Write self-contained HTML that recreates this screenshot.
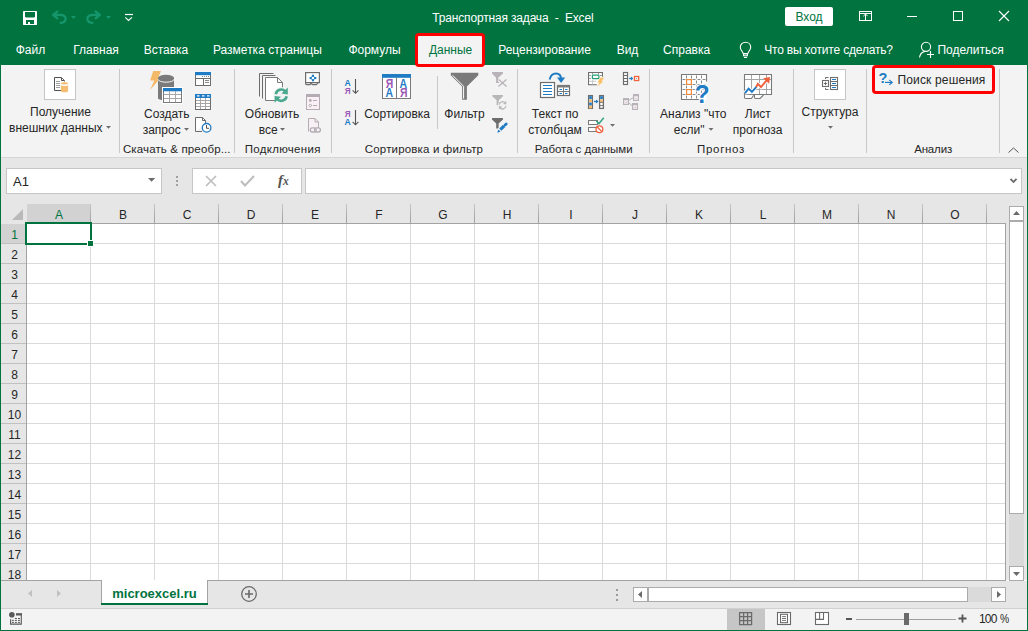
<!DOCTYPE html>
<html><head><meta charset="utf-8">
<style>
*{margin:0;padding:0;box-sizing:border-box}
html,body{width:1028px;height:631px;overflow:hidden;background:#fff}
body{position:relative;font-family:"Liberation Sans",sans-serif;font-size:12px;color:#262626}
.a{position:absolute}
.t{position:absolute;white-space:pre;line-height:12px;font-size:12px}
.w{color:#fff}
svg{position:absolute;overflow:visible}
</style></head><body>
<!-- title + tabs green -->
<div class="a" style="left:0;top:0;width:1028px;height:65px;background:#00733f"></div>
<!-- ribbon -->
<div class="a" style="left:0;top:65px;width:1028px;height:92px;background:#f3f3f3"></div>
<div class="a" style="left:0;top:157px;width:1028px;height:1px;background:#d5d5d5"></div>
<!-- formula area -->
<div class="a" style="left:0;top:158px;width:1028px;height:46px;background:#e6e6e6"></div>

<!-- headers -->
<div class="a" style="left:0;top:204px;width:1028px;height:20px;background:#e6e6e6"></div>
<!-- grid -->
<div class="a" id="grid" style="left:26px;top:224px;width:980px;height:356px;background:#fff"></div>
<!-- row headers -->
<div class="a" style="left:0;top:224px;width:26px;height:356px;background:#e6e6e6"></div>

<!-- GRID -->
<div class="a" style="left:90px;top:204px;width:1px;height:19px;background:linear-gradient(#c4c4c4,#9e9e9e)"></div>
<div class="a" style="left:154px;top:204px;width:1px;height:19px;background:linear-gradient(#c4c4c4,#9e9e9e)"></div>
<div class="a" style="left:218px;top:204px;width:1px;height:19px;background:linear-gradient(#c4c4c4,#9e9e9e)"></div>
<div class="a" style="left:282px;top:204px;width:1px;height:19px;background:linear-gradient(#c4c4c4,#9e9e9e)"></div>
<div class="a" style="left:346px;top:204px;width:1px;height:19px;background:linear-gradient(#c4c4c4,#9e9e9e)"></div>
<div class="a" style="left:410px;top:204px;width:1px;height:19px;background:linear-gradient(#c4c4c4,#9e9e9e)"></div>
<div class="a" style="left:474px;top:204px;width:1px;height:19px;background:linear-gradient(#c4c4c4,#9e9e9e)"></div>
<div class="a" style="left:538px;top:204px;width:1px;height:19px;background:linear-gradient(#c4c4c4,#9e9e9e)"></div>
<div class="a" style="left:602px;top:204px;width:1px;height:19px;background:linear-gradient(#c4c4c4,#9e9e9e)"></div>
<div class="a" style="left:666px;top:204px;width:1px;height:19px;background:linear-gradient(#c4c4c4,#9e9e9e)"></div>
<div class="a" style="left:730px;top:204px;width:1px;height:19px;background:linear-gradient(#c4c4c4,#9e9e9e)"></div>
<div class="a" style="left:794px;top:204px;width:1px;height:19px;background:linear-gradient(#c4c4c4,#9e9e9e)"></div>
<div class="a" style="left:858px;top:204px;width:1px;height:19px;background:linear-gradient(#c4c4c4,#9e9e9e)"></div>
<div class="a" style="left:922px;top:204px;width:1px;height:19px;background:linear-gradient(#c4c4c4,#9e9e9e)"></div>
<div class="a" style="left:986px;top:204px;width:1px;height:19px;background:linear-gradient(#c4c4c4,#9e9e9e)"></div>
<div class="a" style="left:26px;top:223px;width:980px;height:1px;background:#a3a3a3"></div>
<div class="a" style="left:27px;top:204px;width:63px;height:19px;background:#d2d2d2"></div>
<div class="t" style="left:29px;width:60px;text-align:center;top:209px;color:#00733f">A</div>
<div class="t" style="left:93px;width:60px;text-align:center;top:209px;color:#262626">B</div>
<div class="t" style="left:157px;width:60px;text-align:center;top:209px;color:#262626">C</div>
<div class="t" style="left:221px;width:60px;text-align:center;top:209px;color:#262626">D</div>
<div class="t" style="left:285px;width:60px;text-align:center;top:209px;color:#262626">E</div>
<div class="t" style="left:349px;width:60px;text-align:center;top:209px;color:#262626">F</div>
<div class="t" style="left:413px;width:60px;text-align:center;top:209px;color:#262626">G</div>
<div class="t" style="left:477px;width:60px;text-align:center;top:209px;color:#262626">H</div>
<div class="t" style="left:541px;width:60px;text-align:center;top:209px;color:#262626">I</div>
<div class="t" style="left:605px;width:60px;text-align:center;top:209px;color:#262626">J</div>
<div class="t" style="left:669px;width:60px;text-align:center;top:209px;color:#262626">K</div>
<div class="t" style="left:733px;width:60px;text-align:center;top:209px;color:#262626">L</div>
<div class="t" style="left:797px;width:60px;text-align:center;top:209px;color:#262626">M</div>
<div class="t" style="left:861px;width:60px;text-align:center;top:209px;color:#262626">N</div>
<div class="t" style="left:925px;width:60px;text-align:center;top:209px;color:#262626">O</div>
<svg style="left:0;top:204px" width="26" height="20"><polygon points="12,16 23,16 23,5" fill="#b9b9b9"/></svg>
<div class="a" style="left:90px;top:224px;width:1px;height:356px;background:#dadada"></div>
<div class="a" style="left:154px;top:224px;width:1px;height:356px;background:#dadada"></div>
<div class="a" style="left:218px;top:224px;width:1px;height:356px;background:#dadada"></div>
<div class="a" style="left:282px;top:224px;width:1px;height:356px;background:#dadada"></div>
<div class="a" style="left:346px;top:224px;width:1px;height:356px;background:#dadada"></div>
<div class="a" style="left:410px;top:224px;width:1px;height:356px;background:#dadada"></div>
<div class="a" style="left:474px;top:224px;width:1px;height:356px;background:#dadada"></div>
<div class="a" style="left:538px;top:224px;width:1px;height:356px;background:#dadada"></div>
<div class="a" style="left:602px;top:224px;width:1px;height:356px;background:#dadada"></div>
<div class="a" style="left:666px;top:224px;width:1px;height:356px;background:#dadada"></div>
<div class="a" style="left:730px;top:224px;width:1px;height:356px;background:#dadada"></div>
<div class="a" style="left:794px;top:224px;width:1px;height:356px;background:#dadada"></div>
<div class="a" style="left:858px;top:224px;width:1px;height:356px;background:#dadada"></div>
<div class="a" style="left:922px;top:224px;width:1px;height:356px;background:#dadada"></div>
<div class="a" style="left:986px;top:224px;width:1px;height:356px;background:#dadada"></div>
<div class="a" style="left:27px;top:243px;width:978px;height:1px;background:#dadada"></div>
<div class="a" style="left:27px;top:263px;width:978px;height:1px;background:#dadada"></div>
<div class="a" style="left:27px;top:283px;width:978px;height:1px;background:#dadada"></div>
<div class="a" style="left:27px;top:303px;width:978px;height:1px;background:#dadada"></div>
<div class="a" style="left:27px;top:323px;width:978px;height:1px;background:#dadada"></div>
<div class="a" style="left:27px;top:343px;width:978px;height:1px;background:#dadada"></div>
<div class="a" style="left:27px;top:363px;width:978px;height:1px;background:#dadada"></div>
<div class="a" style="left:27px;top:383px;width:978px;height:1px;background:#dadada"></div>
<div class="a" style="left:27px;top:403px;width:978px;height:1px;background:#dadada"></div>
<div class="a" style="left:27px;top:423px;width:978px;height:1px;background:#dadada"></div>
<div class="a" style="left:27px;top:443px;width:978px;height:1px;background:#dadada"></div>
<div class="a" style="left:27px;top:463px;width:978px;height:1px;background:#dadada"></div>
<div class="a" style="left:27px;top:483px;width:978px;height:1px;background:#dadada"></div>
<div class="a" style="left:27px;top:503px;width:978px;height:1px;background:#dadada"></div>
<div class="a" style="left:27px;top:523px;width:978px;height:1px;background:#dadada"></div>
<div class="a" style="left:27px;top:543px;width:978px;height:1px;background:#dadada"></div>
<div class="a" style="left:27px;top:563px;width:978px;height:1px;background:#dadada"></div>
<div class="a" style="left:26px;top:224px;width:1px;height:356px;background:#a3a3a3"></div>
<div class="a" style="left:1px;top:243px;width:25px;height:1px;background:#c0c0c0"></div>
<div class="a" style="left:1px;top:263px;width:25px;height:1px;background:#c0c0c0"></div>
<div class="a" style="left:1px;top:283px;width:25px;height:1px;background:#c0c0c0"></div>
<div class="a" style="left:1px;top:303px;width:25px;height:1px;background:#c0c0c0"></div>
<div class="a" style="left:1px;top:323px;width:25px;height:1px;background:#c0c0c0"></div>
<div class="a" style="left:1px;top:343px;width:25px;height:1px;background:#c0c0c0"></div>
<div class="a" style="left:1px;top:363px;width:25px;height:1px;background:#c0c0c0"></div>
<div class="a" style="left:1px;top:383px;width:25px;height:1px;background:#c0c0c0"></div>
<div class="a" style="left:1px;top:403px;width:25px;height:1px;background:#c0c0c0"></div>
<div class="a" style="left:1px;top:423px;width:25px;height:1px;background:#c0c0c0"></div>
<div class="a" style="left:1px;top:443px;width:25px;height:1px;background:#c0c0c0"></div>
<div class="a" style="left:1px;top:463px;width:25px;height:1px;background:#c0c0c0"></div>
<div class="a" style="left:1px;top:483px;width:25px;height:1px;background:#c0c0c0"></div>
<div class="a" style="left:1px;top:503px;width:25px;height:1px;background:#c0c0c0"></div>
<div class="a" style="left:1px;top:523px;width:25px;height:1px;background:#c0c0c0"></div>
<div class="a" style="left:1px;top:543px;width:25px;height:1px;background:#c0c0c0"></div>
<div class="a" style="left:1px;top:563px;width:25px;height:1px;background:#c0c0c0"></div>
<div class="a" style="left:1px;top:224px;width:25px;height:19px;background:#d2d2d2"></div>
<div class="t" style="left:1px;width:27px;text-align:center;top:229px;color:#00733f">1</div>
<div class="t" style="left:1px;width:27px;text-align:center;top:249px;color:#262626">2</div>
<div class="t" style="left:1px;width:27px;text-align:center;top:269px;color:#262626">3</div>
<div class="t" style="left:1px;width:27px;text-align:center;top:289px;color:#262626">4</div>
<div class="t" style="left:1px;width:27px;text-align:center;top:309px;color:#262626">5</div>
<div class="t" style="left:1px;width:27px;text-align:center;top:329px;color:#262626">6</div>
<div class="t" style="left:1px;width:27px;text-align:center;top:349px;color:#262626">7</div>
<div class="t" style="left:1px;width:27px;text-align:center;top:369px;color:#262626">8</div>
<div class="t" style="left:1px;width:27px;text-align:center;top:389px;color:#262626">9</div>
<div class="t" style="left:1px;width:27px;text-align:center;top:409px;color:#262626">10</div>
<div class="t" style="left:1px;width:27px;text-align:center;top:429px;color:#262626">11</div>
<div class="t" style="left:1px;width:27px;text-align:center;top:449px;color:#262626">12</div>
<div class="t" style="left:1px;width:27px;text-align:center;top:469px;color:#262626">13</div>
<div class="t" style="left:1px;width:27px;text-align:center;top:489px;color:#262626">14</div>
<div class="t" style="left:1px;width:27px;text-align:center;top:509px;color:#262626">15</div>
<div class="t" style="left:1px;width:27px;text-align:center;top:529px;color:#262626">16</div>
<div class="t" style="left:1px;width:27px;text-align:center;top:549px;color:#262626">17</div>
<div class="t" style="left:1px;width:27px;text-align:center;top:569px;color:#262626">18</div>
<div class="a" style="left:1005px;top:223px;width:1px;height:358px;background:#a3a3a3"></div>
<div class="a" style="left:1px;top:580px;width:1005px;height:1px;background:#a3a3a3"></div>
<div class="a" style="left:25px;top:222px;width:67px;height:23px;border:2px solid #00733f"></div>
<div class="a" style="left:87px;top:240px;width:7px;height:7px;background:#fff"></div>
<div class="a" style="left:88px;top:241px;width:5px;height:5px;background:#00733f"></div>
<!-- tab bar -->
<div class="a" style="left:0;top:581px;width:1028px;height:27px;background:#e6e6e6"></div>
<!-- status bar -->
<div class="a" style="left:0;top:609px;width:1028px;height:22px;background:#f3f3f3"></div>

<!-- RIBBONICONS -->
<svg style="left:0;top:0" width="1028" height="160">
<defs>
<style>
.gs{stroke:#6d6d6d;stroke-width:1;fill:none}
.gl{stroke:#a6a6a6;stroke-width:1;fill:none}
.bl{fill:#1f7bc4}
.or{fill:#f4b968}
</style>
</defs>
<!-- separators -->
<g fill="#c8c8c8">
<rect x="119" y="69" width="1" height="84"/>
<rect x="234" y="69" width="1" height="84"/>
<rect x="331" y="69" width="1" height="84"/>
<rect x="517" y="69" width="1" height="84"/>
<rect x="649" y="69" width="1" height="84"/>
<rect x="793" y="69" width="1" height="84"/>
<rect x="866" y="69" width="1" height="84"/>
<rect x="999" y="69" width="1" height="84"/>
<rect x="437" y="76" width="1" height="53"/>
</g>
<!-- 1. Получение внешних данных -->
<rect x="44.5" y="69.5" width="31" height="30" fill="#fff" stroke="#c6c6c6"/>
<path d="M54.5,90.5 V77.5 H61.5 L64.5,80.5 V83" fill="#fff" stroke="#505050"/>
<path d="M54.5,90.5 H61" stroke="#505050"/>
<path d="M61.5,78 V80.5 H64" fill="#fff" stroke="#505050"/>
<path d="M56,81.5 H60 M56,83.5 H60 M56,85.5 H60 M56,87.5 H60" stroke="#a0a0a0"/>
<path d="M60.9,84.6 V91 A3.6,1.3 0 0 0 68.1,91 V84.6 A3.6,1.5 0 0 1 60.9,84.6 Z" fill="#f5bd72"/>
<ellipse cx="64.5" cy="83.3" rx="3.7" ry="1.6" fill="#f5bd72" stroke="#fff" stroke-width="0.7"/>
<!-- dropdown arrows -->
<g fill="#6d6d6d">
<polygon points="106,126 111,126 108.5,128.7"/>
<polygon points="184,128 189,128 186.5,130.8"/>
<polygon points="280,128 285,128 282.5,130.8"/>
<polygon points="708.5,128 713.5,128 711,130.8"/>
<polygon points="828,126 833,126 830.5,128.7"/>
<polygon points="610,124 615,124 612.5,126.8"/>
</g>
<!-- 2. Создать запрос -->
<polygon points="153.2,71.1 161,71.1 157.9,78.2 160.3,78.2 150.1,90.1 154.2,80.6 150.1,80.6" class="or"/>
<rect x="158" y="77.7" width="16" height="20.8" fill="#7a7a7a"/>
<ellipse cx="166" cy="77.7" rx="8" ry="2.9" fill="#7a7a7a"/>
<ellipse cx="166" cy="98.3" rx="8" ry="2" fill="#7a7a7a"/>
<path d="M158,79.3 A8,2.9 0 0 0 174,79.3" stroke="#fff" stroke-width="0.9" fill="none"/>
<rect x="162" y="87" width="21" height="17" fill="#fff"/>
<rect x="163.5" y="88.5" width="18" height="14" fill="#fff" stroke="#7a7a7a"/>
<rect x="163" y="88" width="19" height="3.3" class="bl"/>
<path d="M169.5,91 V102 M175.5,91 V102 M164,94.5 H181 M164,98.5 H181" stroke="#a6a6a6"/>
<!-- small icons col -->
<rect x="195.5" y="72.5" width="15" height="13" fill="#fff" stroke="#6d6d6d"/>
<rect x="195" y="72" width="16" height="3.2" class="bl"/>
<path d="M202,76.5 h1 M204,76.5 h1 M206,76.5 h1 M208,76.5 h1" stroke="#888"/>
<path d="M196,78.5 H210 M203.5,78.5 V85" stroke="#6d6d6d"/>
<path d="M205,80.5 H209 M205,82.5 H209" stroke="#888"/>

<rect x="195.5" y="94.5" width="15" height="15" fill="#fff" stroke="#6d6d6d"/>
<rect x="195" y="94" width="16" height="4" class="bl"/>
<path d="M197,95.8 H199.5 M202,95.8 H204.5 M207,95.8 H209.5" stroke="#fff" stroke-width="1.2"/>
<path d="M200.5,98 V109 M205.5,98 V109 M196,100.5 H210 M196,103.5 H210 M196,106.5 H210" stroke="#a6a6a6"/>

<path d="M195.5,131.5 V117.5 H202.5 L205.5,120.5 V123" fill="#fff" stroke="#6d6d6d"/>
<path d="M195.5,131.5 H202" stroke="#6d6d6d"/>
<path d="M202.5,117.5 V120.5 H205.5" fill="none" stroke="#6d6d6d"/>
<circle cx="206.6" cy="127.8" r="4.3" fill="#fff" stroke="#1f7bc4" stroke-width="1.3"/>
<path d="M206.5,125 V128.3 H209" fill="none" stroke="#555" stroke-width="1"/>
<!-- 3. Обновить все -->
<path d="M259.5,96.5 V73.5 H273.5" class="gs" stroke="#7a7a7a"/>
<path d="M262.5,98.5 V75.5 H275.5" class="gs" stroke="#7a7a7a"/>
<path d="M265.5,100.5 V77.5 H277.5 L282.5,82.5 V100.5 Z" fill="#fff" stroke="#7a7a7a"/>
<path d="M277.5,77.5 V82.5 H282.5" fill="none" stroke="#7a7a7a"/>
<circle cx="281.2" cy="95.2" r="8.2" fill="#f3f3f3"/>
<g stroke="#4aa88f" stroke-width="2.6" fill="none">
<path d="M275.8,94.2 A5.5,5.5 0 0 1 285.2,91.3"/>
<path d="M286.6,96.2 A5.5,5.5 0 0 1 277.2,99.1"/>
</g>
<polygon points="287.8,87.6 287.8,94.4 281.4,93.6" fill="#4aa88f"/>
<polygon points="274.6,102.8 274.6,96 281,96.8" fill="#4aa88f"/>
<!-- small: connections -->
<rect x="305.6" y="72.6" width="13.8" height="10" fill="#fff" stroke="#6d6d6d" stroke-width="1.2"/>
<path d="M305.6,82.8 V83.6 Q305.6,84.6 306.6,84.6 H310 L311.2,82.9 M311.6,83 V83.6 Q311.6,84.6 312.6,84.6 H316.3 L318,82.9" fill="none" stroke="#6d6d6d" stroke-width="1.1"/>
<path d="M312.9,75.8 L315.4,78 L312.9,80.2 L310.4,78 Z" fill="none" stroke="#1f7bc4" stroke-width="0.9"/>
<g fill="#1f7bc4"><rect x="311.9" y="74.7" width="2.1" height="2.1"/><rect x="311.9" y="79.2" width="2.1" height="2.1"/><rect x="309.6" y="77" width="2.1" height="2.1"/><rect x="314.2" y="77" width="2.1" height="2.1"/></g>
<!-- properties (disabled) -->
<rect x="306.5" y="94.5" width="13" height="15" fill="#f9f0f5" stroke="#b3adb3"/>
<rect x="306" y="94" width="14" height="3" fill="#b3adb3"/>
<circle cx="310.3" cy="100.5" r="1.4" fill="#b3adb3"/>
<circle cx="310.3" cy="105.5" r="1.2" fill="none" stroke="#b3adb3"/>
<path d="M313,100.5 H317 M313,105.5 H317" stroke="#b3adb3"/>
<!-- edit links (disabled) -->
<path d="M308.5,131.5 V118.5 H315 L318.5,122 V128" fill="#f9f0f5" stroke="#b3adb3"/>
<path d="M315,118.5 V122 H318.5" fill="none" stroke="#b3adb3"/>
<rect x="310.3" y="127.8" width="5.8" height="4.2" rx="2.1" fill="none" stroke="#b3adb3" stroke-width="1.3"/>
<rect x="314.6" y="127.8" width="5.8" height="4.2" rx="2.1" fill="none" stroke="#b3adb3" stroke-width="1.3"/>
<!-- 4. sort AZ / ZA -->
<g font-family="Liberation Sans" font-weight="bold" font-size="9.6">
<text transform="translate(344.5,85.9) scale(0.9,1)" fill="#1f7bc4">А</text>
<text transform="translate(344.8,93.9) scale(0.85,1)" fill="#9b59b6">Я</text>
<text transform="translate(344.8,116.8) scale(0.85,1)" fill="#9b59b6">Я</text>
<text transform="translate(344.5,125.2) scale(0.9,1)" fill="#1f7bc4">А</text>
</g>
<path d="M355.5,79 V93.3 M352.6,90.4 L355.5,93.3 L358.4,90.4" fill="none" stroke="#555" stroke-width="1.1"/>
<path d="M355.5,110 V124.8 M352.6,121.9 L355.5,124.8 L358.4,121.9" fill="none" stroke="#555" stroke-width="1.1"/>
<!-- big sort -->
<rect x="382.5" y="74.5" width="28" height="24" fill="#fff" stroke="#7a7a7a"/>
<rect x="382" y="74" width="29" height="3.8" class="bl"/>
<path d="M396.5,77.5 V98" stroke="#7a7a7a"/>
<g font-family="Liberation Sans" font-weight="bold" font-size="12.3">
<text transform="translate(385.8,88) scale(0.85,1)" fill="#9b59b6">Я</text>
<text transform="translate(385.6,97.4) scale(0.85,1)" fill="#1f7bc4">А</text>
<text transform="translate(399.6,88) scale(0.85,1)" fill="#1f7bc4">А</text>
<text transform="translate(400,97.4) scale(0.85,1)" fill="#9b59b6">Я</text>
</g>
<!-- filter -->
<polygon points="450.8,72.8 478.3,72.8 478.3,75.2 466.9,86.5 466.9,99.8 462.1,99.8 462.1,86.5 450.8,75.2" fill="#7a7a7a"/>
<path d="M452.6,75.3 L463.6,86.3 V98.6" stroke="#fff" stroke-width="1" fill="none"/>
<!-- small funnels -->
<polygon points="492,72 503,72 503,73.4 498.2,77.8 498.2,82 499,82 499,83 496.1,83 496.1,77.8 492,73.4" fill="#b8b3b8"/>
<path d="M498.6,79.6 L506.6,86.6 M506.4,79.6 L498.4,86.6" stroke="#f3f3f3" stroke-width="2.8"/>
<path d="M498.6,79.6 L506.6,86.6 M506.4,79.6 L498.4,86.6" stroke="#b8b3b8" stroke-width="1.3"/>
<polygon points="492.3,95 503,95 503,96.2 498.8,100.3 498.8,105.2 496.6,105.2 496.6,100.3 492.3,96.2" fill="#b8b8b8"/>
<circle cx="502.6" cy="105.3" r="4.6" fill="#f3f3f3"/>
<g stroke="#b8b8b8" stroke-width="1.3" fill="none">
<path d="M499.3,104.6 A3.4,3.4 0 0 1 505.3,102.9"/>
<path d="M505.9,106 A3.4,3.4 0 0 1 499.9,107.7"/>
</g>
<polygon points="506.3,101 506.3,104.6 503,104" fill="#b8b8b8"/>
<polygon points="498.9,109.6 498.9,106 502.2,106.6" fill="#b8b8b8"/>
<polygon points="492,118 503,118 503,119.6 498.6,123.4 498.6,128.6 496.2,128.6 496.2,123.4 492,119.6" fill="#6d6d6d"/>
<path d="M498.5,131.5 L506,124.4" stroke="#f3f3f3" stroke-width="5"/>
<path d="M500.3,129.6 L504.2,125.9" stroke="#1f7bc4" stroke-width="3.2"/>
<path d="M505.1,125 L506.2,124" stroke="#1f7bc4" stroke-width="2.8" stroke-linecap="round"/>
<polygon points="497.3,132.7 498.3,129.4 500.6,131.6" fill="#1f7bc4"/>
<!-- 5. text to columns -->
<rect x="540.5" y="82.5" width="14" height="15" fill="#fff" stroke="#6d6d6d" stroke-width="1.2"/>
<path d="M543,85.5 H552 M543,88.5 H552 M543,91.5 H552 M543,94.5 H552" stroke="#1f7bc4" stroke-width="1.2"/>
<rect x="557.5" y="85.5" width="12" height="10" fill="#fff" stroke="#6d6d6d" stroke-width="1.2"/>
<rect x="557" y="85" width="13" height="2.5" fill="#7a7a7a"/>
<path d="M563.5,87.5 V95 M558,91.5 H569" stroke="#7a7a7a"/>
<path d="M559.5,89.5 H562 M565,89.5 H567.5 M559.5,93.5 H562 M565,93.5 H567.5" stroke="#1f7bc4"/>
<path d="M549.6,79.5 C550.5,75.5 553,73.4 556,73.4 C559.2,73.4 561.1,75.8 561.1,79.2" stroke="#1f7bc4" stroke-width="2" fill="none"/>
<polygon points="557,77.6 565.2,77.6 561.1,83" class="bl"/>
<!-- flash fill -->
<path d="M596.8,84.6 H588.6 V72.6 H602.4 V76.8" fill="#fff" stroke="#707070" stroke-width="1.2"/>
<rect x="589.2" y="73.2" width="12.6" height="11" fill="#fff"/>
<path d="M592.5,73 V74.5 M598.5,73 V74.5 M589,75.5 H591 M600,75.5 H602 M589,78.4 H591" stroke="#9a9a9a" stroke-width="1"/>
<path d="M589,81.3 H596 M592.6,80 V84.3" stroke="#c8c8c8" stroke-width="1"/>
<rect x="592.4" y="75.2" width="6.5" height="3.4" rx="0.6" fill="#fff" stroke="#27a07a" stroke-width="1.25"/>
<polygon points="600.2,77.6 604.4,77.6 601.9,81.4 603.4,81.4 597.1,87.2 599.1,82.8 597.1,82.8" fill="#f9bf62" stroke="#f3f3f3" stroke-width="0.5"/>
<!-- remove duplicates -->
<rect x="588.6" y="95.6" width="3.8" height="12.8" fill="#fff" stroke="#6d6d6d" stroke-width="1.3"/>
<rect x="589.2" y="96.2" width="2.6" height="2.9" class="bl"/>
<rect x="589.2" y="99.4" width="2.6" height="2.9" class="or"/>
<rect x="589.2" y="102.6" width="2.6" height="2.9" class="bl"/>
<rect x="589.2" y="105.6" width="2.6" height="2.8" class="or"/>
<rect x="599.6" y="95.6" width="3.8" height="12.8" fill="#fff" stroke="#6d6d6d" stroke-width="1.3"/>
<rect x="600.2" y="96.2" width="2.6" height="2.9" class="bl"/>
<rect x="600.2" y="99.4" width="2.6" height="2.9" class="or"/>
<path d="M599.6,102.4 H603.4 M599.6,105.5 H603.4" stroke="#6d6d6d" stroke-width="0.9"/>
<path d="M594,101.5 H597.5" stroke="#1f7bc4" stroke-width="1.3"/>
<polygon points="596,99.6 598.6,101.5 596,103.4" class="bl"/>
<!-- data validation -->
<rect x="588.5" y="120.5" width="9" height="4" fill="#fff" stroke="#7a7a7a"/>
<rect x="588.5" y="127.5" width="9" height="4" fill="#fff" stroke="#7a7a7a"/>
<path d="M596.3,120.9 L599,123.6 L603.8,117.8" stroke="#3aa585" stroke-width="1.6" fill="none"/>
<circle cx="599.4" cy="129.2" r="3.4" fill="#fff" stroke="#f0603c" stroke-width="1.3"/>
<path d="M597.2,127 L601.6,131.4" stroke="#f0603c" stroke-width="1.3"/>
<!-- consolidate -->
<rect x="623.5" y="72.5" width="4" height="12" fill="#fff" stroke="#6d6d6d" stroke-width="1.2"/>
<path d="M623.5,75.5 H627.5 M623.5,78.5 H627.5 M623.5,81.5 H627.5" stroke="#6d6d6d" stroke-width="1"/>
<path d="M629.2,78.5 H632" stroke="#1f7bc4" stroke-width="1.4"/>
<polygon points="631,76.4 633.3,78.5 631,80.6" class="bl"/>
<rect x="634.5" y="76.5" width="4.2" height="4" fill="#fff" stroke="#f0603c" stroke-width="1.3"/>
<rect x="636.1" y="78" width="1" height="1" fill="#999"/>
<!-- relationships disabled -->
<path d="M628.5,100.5 L633.5,97.5 M628.5,102.5 L632.5,106" stroke="#b8b3b8" stroke-width="1"/>
<rect x="623.6" y="98.6" width="4.8" height="5.8" fill="#f9f0f5" stroke="#b8b3b8" stroke-width="1.2"/>
<rect x="633.6" y="94.6" width="4.8" height="5.8" fill="#f9f0f5" stroke="#b8b3b8" stroke-width="1.2"/>
<rect x="632.6" y="103.6" width="4.8" height="5.8" fill="#f9f0f5" stroke="#b8b3b8" stroke-width="1.2"/>
<path d="M623.6,99.6 H628.4 M633.6,95.6 H638.4 M632.6,104.6 H637.4" stroke="#b8b3b8" stroke-width="1.4"/>
<path d="M625,102.3 H627 M635,98.3 H637 M634,107.3 H636" stroke="#c8c3c8" stroke-width="0.8"/>
<!-- 6. what-if -->
<rect x="681.5" y="74.5" width="25" height="25" fill="#fff"/>
<path d="M706.5,81.5 V74.5 H681.5 V99.5 H700" fill="none" stroke="#7a7a7a" stroke-width="1.1"/>
<g stroke="#8a8a8a" stroke-width="1" stroke-dasharray="3 2">
<path d="M686.5,75.5 V99 M691.5,75.5 V99 M696.5,75.5 V99 M701.5,75.5 V99"/>
<path d="M682.5,79.5 H706 M682.5,84.5 H706 M682.5,89.5 H706 M682.5,94.5 H706"/>
</g>
<rect x="686.6" y="79.6" width="4.8" height="4.8" fill="#fff" stroke="#f28a3c" stroke-width="1.2"/>
<rect x="686.6" y="89.6" width="4.8" height="4.8" fill="#fff" stroke="#f28a3c" stroke-width="1.2"/>
<text transform="translate(694.8,102.9) scale(0.92,1)" font-family="Liberation Sans" font-weight="bold" font-size="26.5" fill="#1f7bc4" stroke="#fff" stroke-width="2.2" paint-order="stroke">?</text>
<!-- forecast -->
<path d="M744.5,94.5 V74.5 H771.5 V94.5 Z" fill="#fff" stroke="#7a7a7a" stroke-width="1.1"/>
<path d="M751.5,75 V94 M759.5,75 V94 M766.5,75 V94 M745,79.5 H771 M745,89.5 H771" stroke="#a6a6a6"/>
<path d="M744.5,94.5 V97.3 Q744.5,98.5 745.7,98.5 H751.5 L753.6,95.2 M754.5,95 V97.3 Q754.5,98.5 755.7,98.5 H760 L763.5,95" fill="#fff" stroke="#7a7a7a" stroke-width="1.1"/>
<path d="M745,93.2 L748.6,88.6 L751.9,91.8 L756.4,86.8" stroke="#fff" stroke-width="3.8" fill="none"/>
<path d="M756.2,87 L757.8,83.9 L761,87 L767.5,79.4" stroke="#fff" stroke-width="3.8" fill="none"/>
<path d="M745,93.2 L748.6,88.6 L751.9,91.8 L756.4,86.8" stroke="#1f7bc4" stroke-width="1.9" fill="none"/>
<path d="M756.2,87 L757.8,83.9 L761,87 L767.5,79.4" stroke="#f0603c" stroke-width="1.9" fill="none"/>
<polygon points="763.1,78.2 770,77 769.2,83.8" fill="#f0603c"/>
<!-- 7. Структура -->
<rect x="814.5" y="69.5" width="31" height="30" fill="#fff" stroke="#c6c6c6"/>
<rect x="822.5" y="80.5" width="6" height="6" fill="#fff" stroke="#6d6d6d" stroke-width="1.1"/>
<path d="M825.5,81.8 V85.2 M823.8,83.5 H827.2" stroke="#6d6d6d" stroke-width="1"/>
<path d="M825.5,79 V77.5 H828.5 M825.5,88 V89.5 H828.5" fill="none" stroke="#6d6d6d" stroke-width="1"/>
<rect x="830.5" y="77.5" width="7" height="12" fill="#fff" stroke="#6d6d6d" stroke-width="1.1"/>
<path d="M830.5,81.5 H837.5 M830.5,85.5 H837.5" stroke="#6d6d6d" stroke-width="1"/>
<path d="M832,79.5 H836 M832,83.5 H836 M832,87.5 H836" stroke="#1f7bc4" stroke-width="1.2"/>
<!-- 8. Поиск решения -->
<text x="878.4" y="82.8" font-family="Liberation Sans" font-weight="bold" font-size="14.5" fill="#1f7bc4">?</text>
<path d="M885,82.4 H892" stroke="#1f7bc4" stroke-width="1.2"/>
<path d="M889.2,79.9 L892.2,82.4 L889.2,84.9" fill="none" stroke="#1f7bc4" stroke-width="1.2"/>
<!-- collapse -->
<path d="M1008.5,152.5 L1013.5,148 L1018.5,152.5" fill="none" stroke="#555" stroke-width="1"/>
</svg>

<!-- /RIBBONICONS -->
<!-- TITLEICONS -->
<div class="a" style="left:417px;top:35px;width:66px;height:31px;background:#f3f3f3"></div>
<svg style="left:23px;top:11px" width="14" height="14"><rect x="0" y="0" width="14" height="14" rx="0.6" fill="#fff"/><path d="M2,1.1 H12 V5.6 L11,6.6 H3 L2,5.6 Z" fill="#00733f"/><path d="M3,8.9 H11 V12.9 H7 V11.1 H5 V12.9 H3 Z" fill="#00733f"/></svg>
<svg style="left:50px;top:10px" width="18" height="16"><path d="M7.3,1.6 L3.2,4.9 L7.3,8.2" stroke="#15966c" stroke-width="2.4" fill="none" stroke-linejoin="round" stroke-linecap="round"/><path d="M3.5,4.9 H9.5 C13.5,4.9 15.6,6.6 15.6,8.8 C15.6,11 13.5,12.7 10.6,12.9" stroke="#15966c" stroke-width="2.2" fill="none" stroke-linecap="round"/></svg>
<svg style="left:71px;top:16px" width="6" height="4"><polygon points="0,0 5,0 2.5,3" fill="#15966c"/></svg>
<svg style="left:85px;top:10px" width="18" height="16"><g transform="translate(18,0) scale(-1,1)"><path d="M7.3,1.6 L3.2,4.9 L7.3,8.2" stroke="#15966c" stroke-width="2.4" fill="none" stroke-linejoin="round" stroke-linecap="round"/><path d="M3.5,4.9 H9.5 C13.5,4.9 15.6,6.6 15.6,8.8 C15.6,11 13.5,12.7 10.6,12.9" stroke="#15966c" stroke-width="2.2" fill="none" stroke-linecap="round"/></g></svg>
<svg style="left:106px;top:16px" width="6" height="4"><polygon points="0,0 5,0 2.5,3" fill="#15966c"/></svg>
<svg style="left:124px;top:13px" width="10" height="9"><path d="M1,1.5 H9" stroke="#fff" stroke-width="1.2"/><path d="M1.3,4.3 L4.5,7.5 L8,4.3" stroke="#fff" stroke-width="1.1" fill="none"/></svg>
<div class="a" style="left:785px;top:7px;width:48px;height:19px;background:#fff;border-radius:2px"></div>
<div class="t" style="left:785px;width:48px;text-align:center;top:11px;color:#00733f">Вход</div>
<svg style="left:859px;top:11px" width="14" height="10"><rect x="0.5" y="0.5" width="12" height="9" fill="none" stroke="#fff" stroke-width="1"/><path d="M0.5,2.5 H12.5 M6.5,3 V9.5 M4.3,5.2 L6.5,3 L8.7,5.2" stroke="#fff" stroke-width="1" fill="none"/></svg>
<div class="a" style="left:907px;top:16px;width:10px;height:1px;background:#fff"></div>
<svg style="left:953px;top:11px" width="10" height="10"><rect x="0.5" y="0.5" width="9" height="9" fill="none" stroke="#fff" stroke-width="1"/></svg>
<svg style="left:999px;top:11px" width="10" height="10"><path d="M0,0 L10,10 M10,0 L0,10" stroke="#fff" stroke-width="1.1"/></svg>
<svg style="left:739px;top:41px" width="13" height="18"><path d="M4.2,12.5 L2.8,9.8 C1.9,8.8 1.3,7.6 1.3,6.2 C1.3,3.3 3.6,1.2 6.5,1.2 C9.4,1.2 11.7,3.3 11.7,6.2 C11.7,7.6 11.1,8.8 10.2,9.8 L8.8,12.5 Z" fill="none" stroke="#fff" stroke-width="1.1"/><rect x="4.6" y="12.9" width="3.8" height="1.9" fill="none" stroke="#fff" stroke-width="1.1"/><rect x="5" y="16" width="3" height="1" fill="#fff"/></svg>
<svg style="left:918px;top:41px" width="18" height="18"><circle cx="8" cy="5.8" r="4.6" fill="none" stroke="#fff" stroke-width="1.1"/><path d="M1.5,16.5 C2,13 4,11.2 6.8,10.4" fill="none" stroke="#fff" stroke-width="1.1"/><path d="M12.5,10 V17 M9,13.5 H16" stroke="#fff" stroke-width="1.1"/></svg>
<!-- CONTROLS -->
<div class="a" style="left:6px;top:168px;width:156px;height:26px;background:#fff;border:1px solid #c6c6c6"></div>
<div class="a" style="left:13px;top:175px;font-size:13px;line-height:13px;white-space:pre;color:#262626">A1</div>
<svg style="left:148px;top:178px" width="8" height="5"><polygon points="0,0 7.2,0 3.6,3.8" fill="#6a6a6a"/></svg>
<div class="a" style="left:176px;top:176px;width:2px;height:2px;background:#a0a0a0"></div>
<div class="a" style="left:176px;top:180px;width:2px;height:2px;background:#a0a0a0"></div>
<div class="a" style="left:176px;top:184px;width:2px;height:2px;background:#a0a0a0"></div>
<div class="a" style="left:192px;top:168px;width:110px;height:26px;background:#fff;border:1px solid #c6c6c6"></div>
<svg style="left:205px;top:175px" width="13" height="13"><path d="M1,1 L11,11 M11,1 L1,11" stroke="#bdbdbd" stroke-width="1.6"/></svg>
<svg style="left:240px;top:175px" width="15" height="13"><path d="M1,6 L5,10.5 L14,1" stroke="#bdbdbd" stroke-width="2" fill="none"/></svg>
<div class="a" style="left:278px;top:173px;font-family:'Liberation Serif';font-style:italic;font-weight:bold;font-size:15px;line-height:15px;color:#555;white-space:pre">f<span style="font-size:11.5px;margin-left:0px">x</span></div>
<div class="a" style="left:305px;top:168px;width:717px;height:26px;background:#fff;border:1px solid #c6c6c6"></div>
<svg style="left:1010px;top:178px" width="8" height="6"><path d="M0.5,0.8 L3.5,4 L6.5,0.8" stroke="#6a6a6a" stroke-width="1.8" fill="none"/></svg>
<div class="a" style="left:1006px;top:204px;width:21px;height:376px;background:#e6e6e6"></div>
<div class="a" style="left:1009px;top:221px;width:15px;height:346px;background:#dadada"></div>
<div class="a" style="left:1009px;top:206px;width:15px;height:15px;background:#fff;border:1px solid #ababab"></div>
<svg style="left:1013px;top:211px" width="8" height="5"><polygon points="0,4 7,4 3.5,0" fill="#6a6a6a"/></svg>
<div class="a" style="left:1009px;top:221px;width:15px;height:293px;background:#fff;border:1px solid #ababab"></div>
<div class="a" style="left:1009px;top:566px;width:15px;height:15px;background:#fff;border:1px solid #ababab"></div>
<svg style="left:1013px;top:572px" width="8" height="5"><polygon points="0,0 7,0 3.5,4" fill="#6a6a6a"/></svg>
<svg style="left:28px;top:590px" width="5" height="8"><polygon points="4,0 4,7 0,3.5" fill="#c0c0c0"/></svg>
<svg style="left:57px;top:590px" width="5" height="8"><polygon points="0,0 0,7 4,3.5" fill="#c0c0c0"/></svg>
<div class="a" style="left:101px;top:580px;width:107px;height:25px;background:#fff;border-left:1px solid #a3a3a3;border-right:1px solid #a3a3a3"></div>
<div class="a" style="left:101px;top:603px;width:107px;height:2px;background:#00733f"></div>
<div class="a" style="left:101px;top:587px;width:107px;text-align:center;font-weight:bold;font-size:13px;line-height:13px;color:#00733f;white-space:pre">microexcel.ru</div>
<svg style="left:240px;top:585px" width="18" height="18"><circle cx="9" cy="9" r="7.3" stroke="#6a6a6a" stroke-width="1.3" fill="none"/><path d="M9,5 V13 M5,9 H13" stroke="#6a6a6a" stroke-width="1.6"/></svg>
<div class="a" style="left:616px;top:589px;width:2px;height:2px;background:#9a9a9a"></div>
<div class="a" style="left:616px;top:594px;width:2px;height:2px;background:#9a9a9a"></div>
<div class="a" style="left:616px;top:599px;width:2px;height:2px;background:#9a9a9a"></div>
<div class="a" style="left:633px;top:587px;width:373px;height:15px;background:#dadada"></div>
<div class="a" style="left:633px;top:587px;width:15px;height:15px;background:#fff;border:1px solid #ababab"></div>
<svg style="left:638px;top:591px" width="5" height="8"><polygon points="4,0 4,7 0,3.5" fill="#6a6a6a"/></svg>
<div class="a" style="left:648px;top:587px;width:320px;height:15px;background:#fff;border:1px solid #ababab"></div>
<div class="a" style="left:991px;top:587px;width:15px;height:15px;background:#fff;border:1px solid #ababab"></div>
<svg style="left:997px;top:591px" width="5" height="8"><polygon points="0,0 0,7 4,3.5" fill="#6a6a6a"/></svg>
<div class="a" style="left:0;top:608px;width:1028px;height:1px;background:#d0d0d0"></div>
<svg style="left:9px;top:611px" width="14" height="15"><circle cx="2.85" cy="3.8" r="2.8" fill="#5a5a5a"/><path d="M1.6,8.2 V13.1 H12.3 V2.3" fill="none" stroke="#5a5a5a" stroke-width="1.1"/><rect x="7" y="2.2" width="5.8" height="2.3" fill="#5a5a5a"/><path d="M5.9,7.5 h2 M9,7.5 h2 M2.9,9.4 h2 M5.9,9.4 h2 M9,9.4 h2 M2.9,11.4 h2 M5.9,11.4 h2 M9,11.4 h2" stroke="#5a5a5a" stroke-width="1"/></svg>
<div class="a" style="left:727px;top:609px;width:38px;height:21px;background:#c6c6c6"></div>
<svg style="left:739px;top:612px" width="14" height="14"><path d="M0.6,0 V13 M4.6,0 V13 M8.6,0 V13 M12.6,0 V13 M0,0.6 H13 M0,4.6 H13 M0,8.6 H13 M0,12.6 H13" stroke="#6a6a6a" stroke-width="1.25"/></svg>
<svg style="left:777px;top:612px" width="15" height="14"><rect x="0.5" y="0.5" width="13" height="12" fill="#fff" stroke="#6a6a6a" stroke-width="1.1"/><rect x="3.5" y="2.3" width="7" height="8.4" fill="#fff" stroke="#6a6a6a" stroke-width="1.1"/><path d="M5,4.6 H9 M5,6.5 H9 M5,8.4 H9" stroke="#6a6a6a" stroke-width="0.9"/></svg>
<svg style="left:815px;top:612px" width="15" height="14"><rect x="0.5" y="0.5" width="13" height="12" fill="#fff" stroke="#6a6a6a" stroke-width="1.1"/><path d="M0.5,7.4 H8.5 V0.5 M4.6,0.5 V7.4" fill="none" stroke="#6a6a6a" stroke-width="1.1"/></svg>
<div class="a" style="left:846px;top:618px;width:6px;height:2px;background:#555"></div>
<div class="a" style="left:856px;top:619px;width:100px;height:1px;background:#a0a0a0"></div>
<div class="a" style="left:904px;top:613px;width:5px;height:12px;background:#6a6a6a"></div>
<svg style="left:958px;top:614px" width="9" height="9"><path d="M4.5,0.5 V8.5 M0.5,4.5 H8.5" stroke="#555" stroke-width="1.8"/></svg>
<div class="t" style="left:979px;top:613px;color:#262626;letter-spacing:-0.8px">100</div><div class="t" style="left:999.8px;top:613px;color:#262626;transform:scaleX(0.86);transform-origin:0 0">%</div>
<!-- TEXTS -->
<div class="t" style="left:362.9px;width:300px;text-align:center;top:12px;color:#fff;letter-spacing:-0.17px">Транспортная задача  -  Excel</div>
<div class="t" style="left:-119.5px;width:300px;text-align:center;top:44px;color:#fff">Файл</div>
<div class="t" style="left:-54.0px;width:300px;text-align:center;top:44px;color:#fff">Главная</div>
<div class="t" style="left:16.0px;width:300px;text-align:center;top:44px;color:#fff">Вставка</div>
<div class="t" style="left:117.4px;width:300px;text-align:center;top:44px;color:#fff">Разметка страницы</div>
<div class="t" style="left:224.5px;width:300px;text-align:center;top:44px;color:#fff">Формулы</div>
<div class="t" style="left:300.6px;width:300px;text-align:center;top:44px;color:#00733f">Данные</div>
<div class="t" style="left:394.5px;width:300px;text-align:center;top:44px;color:#fff">Рецензирование</div>
<div class="t" style="left:477.5px;width:300px;text-align:center;top:44px;color:#fff">Вид</div>
<div class="t" style="left:536.6px;width:300px;text-align:center;top:44px;color:#fff">Справка</div>
<div class="t" style="left:678.5px;width:300px;text-align:center;top:44px;color:#fff;letter-spacing:-0.18px">Что вы хотите сделать?</div>
<div class="t" style="left:820.6px;width:300px;text-align:center;top:44px;color:#fff">Поделиться</div>
<div class="t" style="left:-89.5px;width:300px;text-align:center;top:106px;">Получение</div>
<div class="t" style="left:-94.2px;width:300px;text-align:center;top:122px;">внешних данных</div>
<div class="t" style="left:16.8px;width:300px;text-align:center;top:108px;">Создать</div>
<div class="t" style="left:11.7px;width:300px;text-align:center;top:124px;">запрос</div>
<div class="t" style="left:122.0px;width:300px;text-align:center;top:108px;">Обновить</div>
<div class="t" style="left:118.2px;width:300px;text-align:center;top:124px;">все</div>
<div class="t" style="left:247.1px;width:300px;text-align:center;top:108px;">Сортировка</div>
<div class="t" style="left:314.5px;width:300px;text-align:center;top:108px;">Фильтр</div>
<div class="t" style="left:405.2px;width:300px;text-align:center;top:108px;">Текст по</div>
<div class="t" style="left:405.1px;width:300px;text-align:center;top:124px;">столбцам</div>
<div class="t" style="left:543.3px;width:300px;text-align:center;top:108px;">Анализ "что</div>
<div class="t" style="left:539.2px;width:300px;text-align:center;top:124px;">если"</div>
<div class="t" style="left:607.8px;width:300px;text-align:center;top:108px;">Лист</div>
<div class="t" style="left:607.6px;width:300px;text-align:center;top:124px;">прогноза</div>
<div class="t" style="left:680.0px;width:300px;text-align:center;top:106px;">Структура</div>
<div class="t" style="left:26.8px;width:300px;text-align:center;top:143px;font-size:11.5px;line-height:12px;letter-spacing:0.14px;">Скачать &amp; преобр...</div>
<div class="t" style="left:132.7px;width:300px;text-align:center;top:143px;font-size:11.5px;line-height:12px;letter-spacing:0.3px;">Подключения</div>
<div class="t" style="left:274.0px;width:300px;text-align:center;top:143px;font-size:11.5px;line-height:12px;letter-spacing:0.16px;">Сортировка и фильтр</div>
<div class="t" style="left:433.7px;width:300px;text-align:center;top:143px;font-size:11.5px;line-height:12px;letter-spacing:-0.05px;">Работа с данными</div>
<div class="t" style="left:571.0px;width:300px;text-align:center;top:143px;font-size:11.5px;line-height:12px;letter-spacing:0.68px;">Прогноз</div>
<div class="t" style="left:783.1px;width:300px;text-align:center;top:143px;font-size:11.5px;line-height:12px;letter-spacing:-0.16px;">Анализ</div>
<div class="t" style="left:897.5px;top:74px;letter-spacing:0.15px">Поиск решения</div>
<!-- window border -->
<div class="a" style="left:0;top:0;width:1px;height:631px;background:#00733f"></div>
<div class="a" style="left:1027px;top:0;width:1px;height:631px;background:#00733f"></div>
<div class="a" style="left:0;top:630px;width:1028px;height:1px;background:#00733f"></div>
<!-- RED -->
<div class="a" style="left:415px;top:33px;width:70px;height:34px;border:3px solid #ff0000;border-radius:4px"></div>
<div class="a" style="left:872px;top:65px;width:123px;height:29px;border:3px solid #ff0000;border-radius:4px"></div>
</body></html>
